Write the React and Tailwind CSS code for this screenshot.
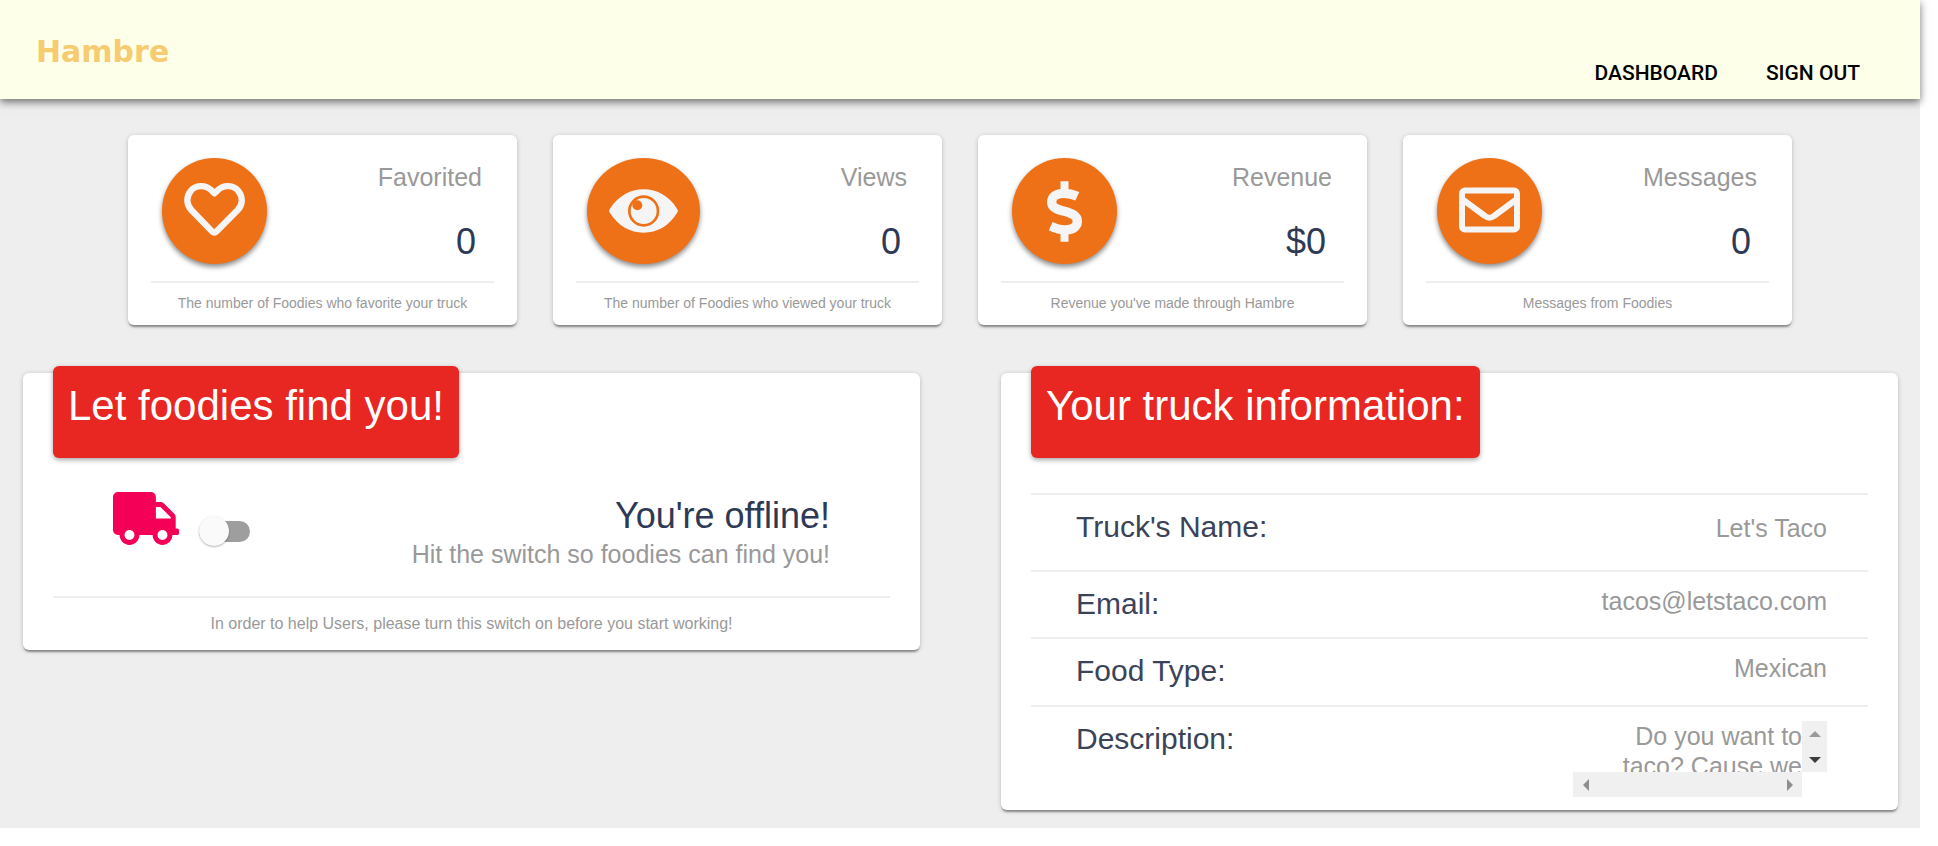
import { FaTruck } from "react-icons/fa";

const CARD_SHADOW = "shadow-[0_1px_5px_rgba(0,0,0,0.2),0_3px_2px_-1px_rgba(0,0,0,0.35)]";

function HeartIcon() {
  return (
    <svg viewBox="102 92 183 183" className="size-[61px]" fill="none" stroke="currentColor" strokeWidth="19" strokeLinejoin="round" aria-hidden="true">
      <path d="M193 129 L184 120 C166 102 136 104 122 122 C107 141 110 164 124 179 L186 243 Q193 250 200 243 L263 179 C278 164 280 141 265 122 C251 104 221 102 203 120 Z" />
    </svg>
  );
}

function EyeIcon() {
  return (
    <svg viewBox="207 211 207 183" className="h-[61px] w-[69px]" aria-hidden="true">
      <path fill="currentColor" d="M210 294 C235 256 270 236 311 236 C352 236 387 256 411 294 Q416 301 411 307 C387 346 352 366 311 366 C270 366 235 346 210 307 Q205 301 210 294 Z" />
      <circle cx="311" cy="301" r="43" fill="none" stroke="#ee7118" strokeWidth="8" />
      <circle cx="292" cy="284" r="15" fill="#ee7118" />
    </svg>
  );
}

function DollarIcon() {
  return (
    <svg viewBox="263 210 105 183" className="h-[61px] w-[35px]" fill="none" stroke="currentColor" aria-hidden="true">
      <path strokeWidth="28" d="M354 256 C341 250 328 247 314 247 C292 247 277 256 277 273 C277 290 292 295 315 301 C340 308 354 314 354 331 C354 349 338 357 315 357 C300 357 288 352 274 346" />
      <path strokeWidth="24" d="M315.5 211 V248 M315.5 356 V392" />
    </svg>
  );
}

function EnvelopeIcon() {
  return (
    <svg viewBox="0 0 61 61" className="size-[61px]" fill="none" stroke="currentColor" strokeWidth="6" aria-hidden="true">
      <rect x="3" y="9.5" width="55" height="39" rx="3" />
      <path d="M3 18 L26 35 Q30.5 38.5 35 35 L58 18" />
    </svg>
  );
}

const stats = [
  { title: "Favorited", value: "0", note: "The number of Foodies who favorite your truck", Icon: HeartIcon },
  { title: "Views", value: "0", note: "The number of Foodies who viewed your truck", Icon: EyeIcon },
  { title: "Revenue", value: "$0", note: "Revenue you've made through Hambre", Icon: DollarIcon },
  { title: "Messages", value: "0", note: "Messages from Foodies", Icon: EnvelopeIcon },
];

function StatCard({ title, value, note, Icon }) {
  return (
    <article className={`rounded-md bg-white px-[23px] pt-[23px] ${CARD_SHADOW}`}>
      <div className="flex justify-between pl-[11px]">
        <div className="flex h-[106px] min-w-[105px] items-center justify-center rounded-[50%] bg-[#ee7118] px-[22px] text-[#f5f5f5] shadow-[0_3px_5px_rgba(0,0,0,0.45)]">
          <Icon />
        </div>
        <div className="flex flex-col pr-3 text-right">
          <h2 className="pt-1 text-[25px] leading-[30px] text-[#999]">{title}</h2>
          <p className="pt-[29px] pr-[6px] text-[36px] leading-[42px] text-[#2e3a55]">{value}</p>
        </div>
      </div>
      <p className="mt-[17px] border-t-2 border-[#eee] pt-[11px] pb-[13px] text-center text-[14px] leading-[18px] text-[#999]">{note}</p>
    </article>
  );
}

function Badge({ children }) {
  return (
    <h2 className="-mt-[7px] h-[92px] w-fit rounded-md bg-[#e82622] px-[15px] pt-[17px] text-[42px] leading-[46px] text-white shadow-[0_2px_5px_rgba(0,0,0,0.35)]">
      {children}
    </h2>
  );
}

function InfoRow({ label, layout, children }) {
  return (
    <div className={`flex justify-between border-t-2 border-[#eee] pr-[41px] pl-[45px] ${layout}`}>
      <dt className="pt-[15px] text-[30px] leading-[34px] text-[#3b4358]">{label}</dt>
      <dd className="pt-[14px] text-right text-[25px] leading-[30px] text-[#999]">{children}</dd>
    </div>
  );
}

function Arrow({ points, label, color }) {
  return (
    <button type="button" aria-label={label} className={`flex size-[25px] items-center justify-center ${color}`}>
      <svg viewBox="0 0 12 12" className="size-3" fill="currentColor" aria-hidden="true">
        <polygon points={points} />
      </svg>
    </button>
  );
}

function Description() {
  return (
    <div className="grid w-[254px] grid-cols-[1fr_25px] grid-rows-[51px_25px]">
      <p className="overflow-hidden pl-10">Do you want to taco? Cause we</p>
      <div className="flex flex-col justify-between bg-[#f0f0f0]">
        <Arrow label="Scroll up" points="0,9 6,3 12,9" color="text-[#9a9a9a]" />
        <Arrow label="Scroll down" points="0,3 6,9 12,3" color="text-[#3c3c3c]" />
      </div>
      <div className="flex justify-between bg-[#f0f0f0]">
        <Arrow label="Scroll left" points="9,0 3,6 9,12" color="text-[#8e8e8e]" />
        <Arrow label="Scroll right" points="3,0 9,6 3,12" color="text-[#8e8e8e]" />
      </div>
    </div>
  );
}

export default function App() {
  return (
    <div className="flex min-h-screen flex-col bg-white pr-[18px] pb-[18px] font-['Liberation_Sans',Arial,sans-serif]">
      <header className="relative z-10 flex h-[99px] items-start justify-between bg-[#fdffe9] pr-[60px] pl-9 shadow-[0_3px_8px_rgba(0,0,0,0.55)]">
        <a href="#home" className="pt-8 font-['DejaVu_Sans',sans-serif] text-[30px] leading-10 font-bold text-[#f5cc70]">
          Hambre
        </a>
        <nav className="flex gap-12 pt-[60px] font-['Roboto',sans-serif] text-[21px] leading-[26px] font-medium text-black">
          <a href="#dashboard">DASHBOARD</a>
          <a href="#signout">SIGN OUT</a>
        </nav>
      </header>

      <main className="flex-1 bg-[#eee] pt-9 pb-[18px]">
        <section className="grid grid-cols-4 gap-9 px-32">
          {stats.map((s) => (
            <StatCard key={s.title} {...s} />
          ))}
        </section>

        <section className="mt-12 grid grid-cols-2 items-start gap-[81px] pr-[22px] pl-[23px]">
          <article className={`rounded-md bg-white px-[30px] ${CARD_SHADOW}`}>
            <Badge>Let foodies find you!</Badge>
            <div className="flex justify-between px-[60px] pt-[34px]">
              <div className="flex items-start gap-5">
                <FaTruck className="h-[53px] w-[66px] text-[#f50057]" aria-hidden="true" />
                <label className="mt-6 flex cursor-pointer items-center">
                  <input type="checkbox" aria-label="Go online" className="peer sr-only" />
                  <span className="flex h-[30px] w-[51px] items-center">
                    <span className="flex h-[21px] w-full items-center rounded-full bg-[#9e9e9e]">
                      <span className="size-[30px] rounded-full bg-[#fafafa] shadow-[0_1px_2px_rgba(0,0,0,0.3)]" />
                    </span>
                  </span>
                </label>
              </div>
              <div className="flex flex-col gap-0.5 pt-[3px] text-right">
                <p className="text-[36px] leading-[42px] text-[#2e3a55]">You're offline!</p>
                <p className="text-[25px] leading-[30px] text-[#999]">Hit the switch so foodies can find you!</p>
              </div>
            </div>
            <p className="mt-[27px] border-t-2 border-[#eee] pt-4 pb-4 text-center text-[16px] leading-5 text-[#999]">
              In order to help Users, please turn this switch on before you start working!
            </p>
          </article>

          <article className={`rounded-md bg-white px-[30px] ${CARD_SHADOW}`}>
            <Badge>Your truck information:</Badge>
            <dl className="mt-[35px]">
              <InfoRow label="Truck's Name:" layout="h-[77px] items-baseline">Let's Taco</InfoRow>
              <InfoRow label="Email:" layout="h-[67px] items-start">tacos@letstaco.com</InfoRow>
              <InfoRow label="Food Type:" layout="h-[68px] items-start">Mexican</InfoRow>
              <InfoRow label="Description:" layout="h-[105px] items-start"><Description /></InfoRow>
            </dl>
          </article>
        </section>
      </main>
    </div>
  );
}
